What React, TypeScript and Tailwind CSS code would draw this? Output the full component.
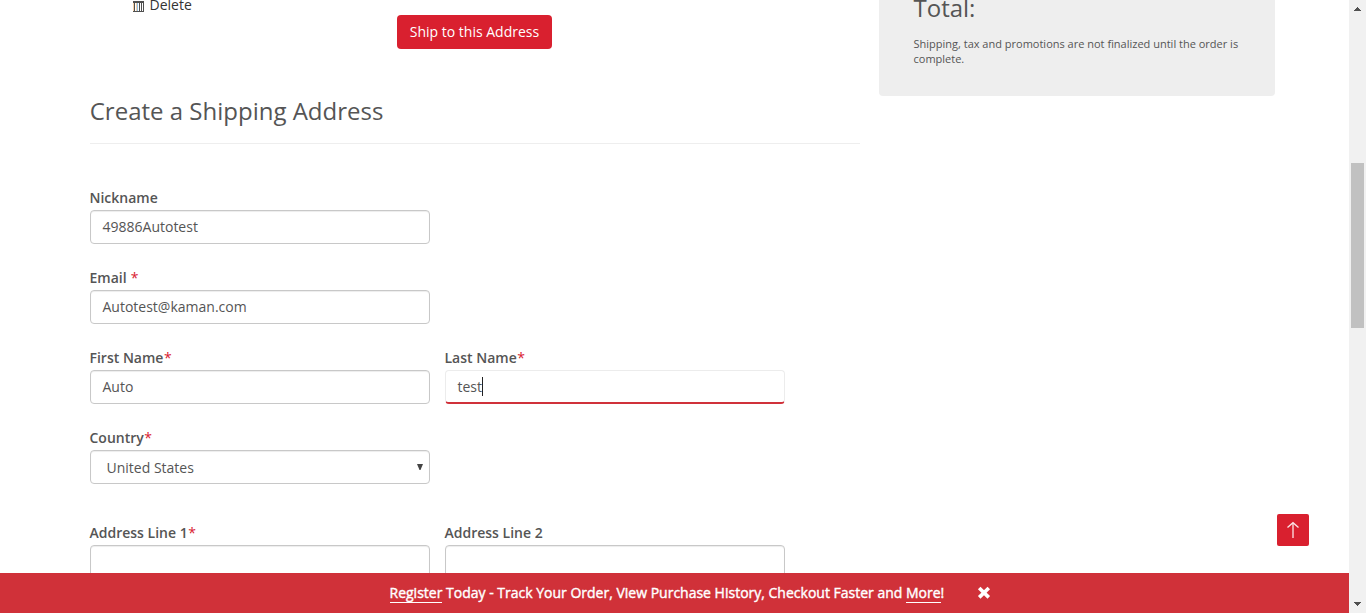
import type { ReactNode } from "react";

function Label({ children, required }: { children: ReactNode; required?: boolean }) {
  return (
    <span className="mb-[2px] -ml-[0.5px] block h-5 text-[14px] leading-5 font-semibold whitespace-pre text-[#555]">
      {children}
      {required && <span className="ml-[0.5px] font-normal text-[#d9202f]">*</span>}
    </span>
  );
}

function Field({ label, value, required }: { label: string; value: string; required?: boolean }) {
  return (
    <label className="block w-[340px]">
      <Label required={required}>{label}</Label>
      <span className="block h-[34px] rounded border border-[#c8c8c8] px-[11.5px] pt-[6px] text-[14px] leading-5 shadow-[inset_0_1px_1px_rgba(0,0,0,0.075)]">
        {value}
      </span>
    </label>
  );
}

function FocusedField() {
  return (
    <label className="block w-[340px]">
      <Label required>Last Name</Label>
      <span className="flex h-[34px] rounded border border-[#ececec] border-b-2 border-b-[#d0313a] px-[11.5px] pt-[6px] text-[14px] leading-5">
        test
        <span className="-ml-[0.5px] h-[19px] w-px bg-[#222]" />
      </span>
    </label>
  );
}

export default function App() {
  return (
    <div className="relative flex h-[613px] w-[1366px] overflow-hidden bg-white font-['Open_Sans','Noto_Sans',sans-serif] text-[#555]">
      <div className="flex w-[1349px] flex-col">
        <main className="flex h-[573px] items-start overflow-hidden pl-[90px]">
          <section className="w-[770px]">
            <div className="flex h-[49px] items-start">
              <div className="-mt-[5px] ml-[43px] flex w-[264px] items-center text-[14px] leading-5 text-[#333]">
                <svg className="mt-[3px] mr-[5.5px]" width="11" height="11" viewBox="0 0 11 11" shapeRendering="crispEdges">
                  <path fill="#505050" d="M0 0h11v11H0z" />
                  <path fill="#f3cfa8" d="M0 2h1v8H0zM3 2h1v8H3z" />
                  <path fill="#fff" d="M2 2h1v8H2zM5 2h1v8H5zM7 2h1v8H7zM9 2h1v8H9z" />
                  <path fill="#8fc0e8" d="M4 2h1v8H4z" />
                </svg>
                Delete
              </div>
              <button className="mt-[15px] h-[34px] w-[155px] rounded bg-[#d9202f] text-[14px] leading-5 text-white">
                Ship to this Address
              </button>
            </div>
            <h2 className="mt-[45px] h-[50px] border-b border-[#eee] text-[24px] leading-[34px]">
              <span className="-ml-[0.25px]">Create a Shipping Address</span>
            </h2>
            <form className="pt-11">
              <div className="h-20">
                <Field label="Nickname" value="49886Autotest" />
              </div>
              <div className="h-20">
                <Field label="Email " value="Autotest@kaman.com" required />
              </div>
              <div className="flex h-20 gap-[15px]">
                <Field label="First Name" value="Auto" required />
                <FocusedField />
              </div>
              <div className="h-[95px] w-[340px]">
                <Label required>Country</Label>
                <div className="flex h-[34px] items-start justify-between rounded border border-[#c8c8c8] pt-[7px] pr-[6px] pl-[15.5px] text-[14px] leading-5 shadow-[inset_0_1px_1px_rgba(0,0,0,0.075)]">
                  United States
                  <svg className="mt-[6px]" width="6" height="6" viewBox="0 0 6 6">
                    <path fill="#444" d="M0 0h6L3.5 6h-1z" />
                  </svg>
                </div>
              </div>
              <div className="flex gap-[15px]">
                <Field label="Address Line 1" value="" required />
                <Field label="Address Line 2" value="" />
              </div>
            </form>
          </section>
          <aside className="ml-[19px] h-24 w-[396px] rounded-b bg-[#eee] px-[34.5px]">
            <h3 className="-mt-[9px] text-[24px] leading-[34px]">Total:</h3>
            <p className="mt-[11px] w-[340px] text-[11px] leading-[15px]">
              Shipping, tax and promotions are not finalized until the order is complete.
            </p>
          </aside>
        </main>
        <footer className="flex h-10 items-start bg-[#d03139] pt-[10px] pl-[389.5px] text-[14px] leading-5 text-white">
          <p className="w-[587px] whitespace-nowrap [-webkit-text-stroke:0.4px_white]">
            <a className="inline-block h-5 border-b border-white">Register</a> Today - Track Your Order, View Purchase History, Checkout Faster and{" "}
            <a className="inline-block h-5 border-b border-white">More</a>!
          </p>
          <svg className="mt-[3px]" width="14" height="13" viewBox="0 0 14 13">
            <path d="M2.2 2l9.6 9.4M11.8 2l-9.6 9.4" stroke="white" strokeWidth="3.6" />
          </svg>
        </footer>
      </div>
      <div className="flex w-[17px] flex-col items-center bg-[#f1f1f1]">
        <svg width="17" height="17" viewBox="0 0 17 17" shapeRendering="crispEdges">
          <path fill="#505050" d="M8 7h1v1h1v1h1v1h1v1H5v-1h1V9h1V8h1z" />
        </svg>
        <div className="mt-[146px] h-[165px] w-[13px] bg-[#c1c1c1]" />
        <svg className="mt-auto" width="17" height="17" viewBox="0 0 17 17" shapeRendering="crispEdges">
          <path fill="#505050" d="M5 6h7v1h-1v1h-1v1H9v1H8V9H7V8H6V7H5z" />
        </svg>
      </div>
      <button className="absolute top-[514px] left-[1277px] size-8 rounded-[2px] bg-[#d9202f]">
        <svg width="32" height="32" viewBox="0 0 32 32" fill="none">
          <path d="M16 9v15" stroke="#f0a0a6" strokeWidth="2" />
          <path d="M10.5 13.5L16 8.7l5.5 4.8" stroke="#fbe4e6" strokeWidth="1.3" />
        </svg>
      </button>
    </div>
  );
}
